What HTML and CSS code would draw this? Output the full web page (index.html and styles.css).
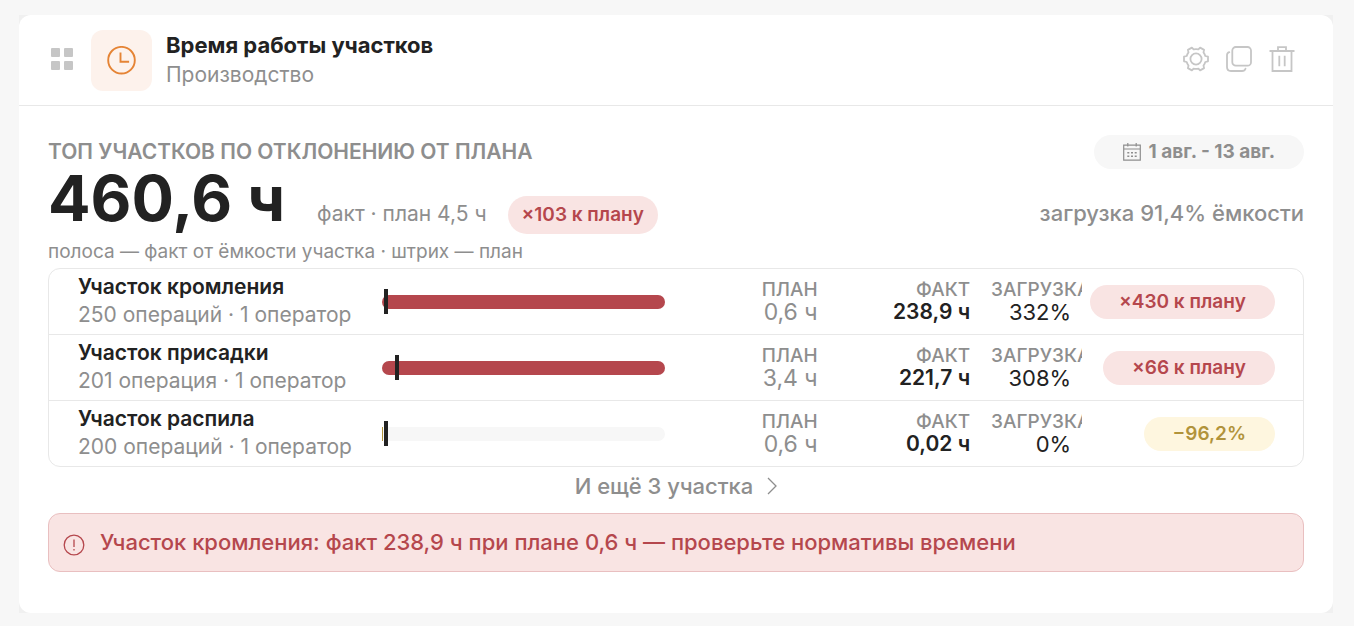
FILE: index.html
```html
<!DOCTYPE html>
<html lang="ru">
<head>
  <meta charset="UTF-8" />
  <meta name="viewport" content="width=device-width, initial-scale=1" />
  <title>Время работы участков</title>
  <link rel="stylesheet" href="styles.css">
</head>
<body>

<main class="board">
  <section class="widget">

    <header class="widget-header">
      <button class="icon-btn" type="button" aria-label="Переместить">
        <svg width="22" height="22" viewBox="0 0 22 22" fill="currentColor">
          <rect x="0" y="0" width="9" height="9" rx="1"/>
          <rect x="13" y="0" width="9" height="9" rx="1"/>
          <rect x="0" y="13" width="9" height="9" rx="1"/>
          <rect x="13" y="13" width="9" height="9" rx="1"/>
        </svg>
      </button>
      <div class="widget-icon">
        <svg width="30" height="30" viewBox="0 0 30 30" fill="none" stroke="currentColor" stroke-width="1.9">
          <circle cx="14.500" cy="14.200" r="13.300"/>
          <path d="M13.500 6.500v9.200h8.600"/>
        </svg>
      </div>
      <div class="widget-title">
        <h1>Время работы участков</h1>
        <p>Производство</p>
      </div>
      <div class="widget-actions">
        <button class="icon-btn" type="button" aria-label="Настройки">
          <svg width="26" height="26" viewBox="0 0 26 26" fill="none" stroke="currentColor" stroke-width="1.8" stroke-linejoin="round">
            <circle cx="13" cy="13" r="5.6"/>
            <path d="M10.600 3.400 8.900 1.600 4.900 3.900 5.500 6.400C4.700 7.300 4.100 8.600 3.700 10L1 10.700v4.600l2.700.7c.4 1.400 1 2.600 1.800 3.600l-.6 2.500 4 2.300 1.700-1.800c1.600.4 3.200.4 4.800 0l1.700 1.800 4-2.300-.6-2.500c.8-1 1.400-2.200 1.800-3.600l2.700-.7v-4.600l-2.700-.7c-.4-1.400-1-2.700-1.800-3.600l.6-2.500-4-2.300-1.700 1.800c-1.600-.4-3.200-.4-4.800 0z"/>
          </svg>
        </button>
        <button class="icon-btn" type="button" aria-label="Дублировать">
          <svg width="26" height="26" viewBox="0 0 26 26" fill="none" stroke="currentColor" stroke-width="1.8" stroke-linecap="round">
            <rect x="6.300" y="1" width="18.700" height="18.700" rx="3.500"/>
            <path d="M3.300 6.200C1.800 6.700 1 7.800 1 9.300V21c0 2.400 1.600 4 4 4h11c1.700 0 3-.8 3.500-2.300"/>
          </svg>
        </button>
        <button class="icon-btn" type="button" aria-label="Удалить">
          <svg width="26" height="26" viewBox="0 0 26 26" fill="none" stroke="currentColor" stroke-width="1.8">
            <path d="M.5 5h25M3.500 5v20h19V5M9 5V1.200h8V5M10.300 9.800v10.400M15.700 9.800v10.400"/>
          </svg>
        </button>
      </div>
    </header>

    <div class="widget-body">
      <div class="top-row">
        <h2>ТОП УЧАСТКОВ ПО ОТКЛОНЕНИЮ ОТ ПЛАНА</h2>
        <button class="period" type="button">
          <svg width="18" height="18" viewBox="0 0 18 18" fill="none" stroke="currentColor" stroke-width="1.2">
            <path d="M.7 2.200h16.600v15H.7zM.7 6h16.600M4.800 0v3.500M13.200 0v3.500"/>
            <path d="M4.300 9.800h2M8 9.800h2M11.700 9.800h2M4.300 13.300h2M8 13.300h2M11.700 13.300h2" stroke-width="1.6"/>
          </svg>
          1 авг. - 13 авг.
        </button>
      </div>

      <div class="total-row">
        <strong class="total">460,6 ч</strong>
        <span class="total-note">факт · план 4,5 ч</span>
        <span class="badge badge-total">×103 к плану</span>
        <span class="capacity">загрузка 91,4% ёмкости</span>
      </div>

      <p class="legend">полоса — факт от ёмкости участка · штрих — план</p>

      <table class="areas">
        <tbody>
          <tr>
            <th scope="row">Участок кромления <small>250 операций · 1 оператор</small></th>
            <td><div class="bar"><div class="fill" style="width: 100%"></div><div class="mark" style="left: 0.6%"></div></div></td>
            <td class="plan"><span class="label">ПЛАН</span>0,6 ч</td>
            <td class="fact"><span class="label">ФАКТ</span>238,9 ч</td>
            <td class="load"><span class="label">ЗАГРУЗКА</span>332%</td>
            <td class="diff"><span class="badge">×430 к плану</span></td>
          </tr>
          <tr>
            <th scope="row">Участок присадки <small>201 операция · 1 оператор</small></th>
            <td><div class="bar"><div class="fill" style="width: 100%"></div><div class="mark" style="left: 4.6%"></div></div></td>
            <td class="plan"><span class="label">ПЛАН</span>3,4 ч</td>
            <td class="fact"><span class="label">ФАКТ</span>221,7 ч</td>
            <td class="load"><span class="label">ЗАГРУЗКА</span>308%</td>
            <td class="diff"><span class="badge">×66 к плану</span></td>
          </tr>
          <tr>
            <th scope="row">Участок распила <small>200 операций · 1 оператор</small></th>
            <td><div class="bar"><div class="fill fill-low" style="width: 0.4%"></div><div class="mark" style="left: 0.6%"></div></div></td>
            <td class="plan"><span class="label">ПЛАН</span>0,6 ч</td>
            <td class="fact"><span class="label">ФАКТ</span>0,02 ч</td>
            <td class="load"><span class="label">ЗАГРУЗКА</span>0%</td>
            <td class="diff"><span class="badge badge-low">−96,2%</span></td>
          </tr>
        </tbody>
      </table>

      <button class="more" type="button">
        И ещё 3 участка
        <svg width="10" height="18" viewBox="0 0 10 18" fill="none" stroke="currentColor" stroke-width="1.3">
          <path d="M1 1l8 8-8 8"/>
        </svg>
      </button>

      <div class="alert" role="alert">
        <svg width="22" height="26" viewBox="0 0 22 26" fill="none" stroke="currentColor" stroke-width="1.3">
          <circle cx="11" cy="15" r="9.8"/>
          <path d="M11 9.500v7.500M11 19v1.600"/>
        </svg>
        <span>Участок кромления: факт 238,9 ч при плане 0,6 ч — проверьте нормативы времени</span>
      </div>
    </div>

  </section>
</main>

</body>
</html>
```
FILE: styles.css
```css
* {
  box-sizing: border-box;
}
body {
  margin: 0;
  padding: 15px 21px 13px 19px;
  background: #f7f7f7;
  color: #222;
  font-family: Inter, "Noto Sans", sans-serif;
  font-size: 22px;
}
h1, h2, p {
  margin: 0;
}
button {
  border: none;
  padding: 0;
  background: none;
  font-family: inherit;
  cursor: pointer;
}
svg {
  display: block;
  flex: none;
}
.board {
  background: #f0f0f0;
}
.widget {
  background: #fff;
  border-radius: 12px;
}

/* Шапка */
.widget-header {
  display: flex;
  align-items: center;
  padding: 15px 38px 14px 32px;
  border-bottom: 1px solid #e8e8e8;
}
.icon-btn {
  padding-bottom: 3px;
  color: #c6c6c6;
}
.widget-icon {
  display: flex;
  align-items: center;
  justify-content: center;
  width: 61px;
  height: 61px;
  margin: 0 14px 0 18px;
  border-radius: 12px;
  background: #fdf2ec;
  color: #e58435;
}
.widget-title {
  flex: 1;
  padding-bottom: 2px;
}
.widget-title h1 {
  font-size: 22px;
  line-height: 30px;
  font-weight: 700;
}
.widget-title p {
  font-size: 21px;
  line-height: 29px;
  color: #8e8e8e;
}
.widget-actions {
  display: flex;
  gap: 17px;
}

/* Итоги */
.widget-body {
  padding: 29px 29px 41px;
}
.top-row {
  display: flex;
  align-items: center;
  justify-content: space-between;
}
.top-row h2 {
  font-size: 21px;
  line-height: 34px;
  font-weight: 600;
  color: #8e8e8e;
}
.period {
  display: flex;
  align-items: center;
  gap: 8px;
  padding: 0 29px;
  border-radius: 17px;
  background: #f7f7f7;
  color: #8e8e8e;
  font-size: 19px;
  line-height: 34px;
  font-weight: 700;
}
.total-row {
  display: flex;
  align-items: baseline;
  height: 66px;
  color: #8e8e8e;
}
.total {
  margin-right: 32px;
  color: #222;
  font-size: 63px;
  line-height: 59px;
  font-weight: 700;
}
.total-note {
  margin-right: 21px;
  font-size: 21px;
}
.badge {
  padding: 0 29px;
  border-radius: 19px;
  background: #f9e4e3;
  color: #b5474d;
  font-size: 19px;
  line-height: 34px;
  font-weight: 600;
  white-space: nowrap;
}
.badge-total {
  padding: 0 14px;
  line-height: 38px;
}
.badge-low {
  background: #fef6df;
  color: #b1933b;
}
.capacity {
  margin-left: auto;
  font-size: 22px;
  font-weight: 500;
}
.legend {
  font-size: 19px;
  line-height: 33px;
  color: #8e8e8e;
}

/* Участки */
.areas {
  display: block;
  border: 1px solid #e8e8e8;
  border-radius: 12px;
}
.areas tbody {
  display: block;
}
.areas tr {
  display: grid;
  box-sizing: content-box;
  grid-template-columns: 28fr 28fr 13fr 13fr 9fr 17fr;
  align-items: center;
  gap: 21px;
  height: 65px;
  padding: 0 28px 0 29px;
}
.areas tr + tr {
  border-top: 1px solid #e8e8e8;
}
.areas th, .areas td {
  min-width: 0;
  padding: 0;
  line-height: 22px;
  text-align: right;
  white-space: nowrap;
}
.areas th {
  padding-bottom: 2px;
  font-size: 21px;
  line-height: 28px;
  font-weight: 600;
  text-align: left;
}
.areas small {
  display: block;
  color: #8e8e8e;
  font-size: 21px;
  font-weight: 400;
}
.label {
  display: block;
  color: #8e8e8e;
  font-size: 19px;
  font-weight: 500;
}
.areas .plan, .areas .fact, .areas .load {
  padding-bottom: 2px;
}
.areas .plan {
  color: #8e8e8e;
  font-size: 23px;
}
.areas .fact {
  font-size: 21px;
  font-weight: 600;
}
.areas .load {
  overflow: hidden;
  padding-right: 11px;
}
.areas .diff {
  display: flex;
  justify-content: flex-end;
}
.bar {
  position: relative;
  height: 14px;
  border-radius: 7px;
  background: #f7f7f7;
}
.fill {
  height: 100%;
  border-radius: 7px;
  background: #b5474d;
}
.fill-low {
  border-radius: 0;
  background: #b1933b;
}
.mark {
  position: absolute;
  top: -6px;
  width: 4px;
  height: 25px;
  background: #222;
}

/* Низ виджета */
.more {
  display: flex;
  align-items: center;
  gap: 14px;
  margin: 0 auto;
  padding-bottom: 8px;
  color: #8e8e8e;
  font-size: 22px;
  line-height: 38px;
  font-weight: 500;
}
.alert {
  display: flex;
  align-items: center;
  gap: 15px;
  padding: 14px;
  border: 1px solid #e9bfc0;
  border-radius: 12px;
  background: #f9e4e3;
  color: #b5474d;
  font-size: 22px;
  line-height: 29px;
  font-weight: 500;
}
```
